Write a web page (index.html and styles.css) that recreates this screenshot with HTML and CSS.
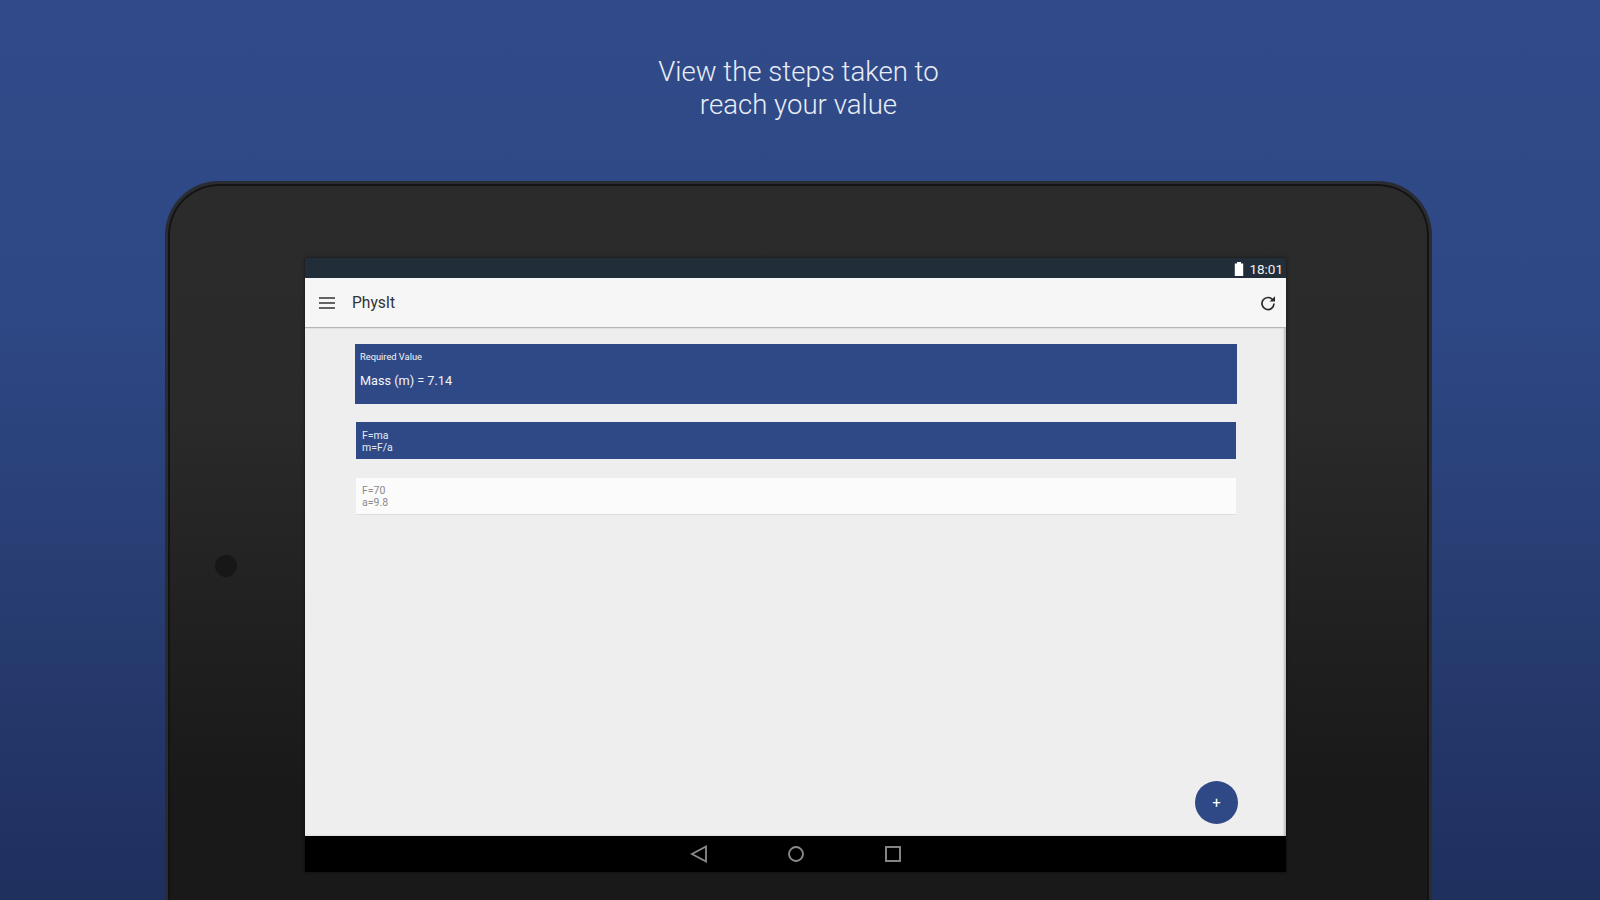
FILE: index.html
```html
<!DOCTYPE html>
<html lang="en">

<head>
  <meta charset="UTF-8" />
  <meta name="viewport" content="width=device-width, initial-scale=1.0" />
  <title>PhysIt</title>
  <link rel="stylesheet" href="styles.css">
</head>

<body>
  <div class="page">
    <h1 class="headline">View the steps taken to<br />reach your value</h1>

    <div class="tablet">
      <div class="camera"></div>
      <div class="screen">
        <div class="status-bar">
          <svg class="battery" width="10" height="14" viewBox="0 0 10 14">
            <path d="M3 0h4v1.5h2.2V14H.8V1.5H3z" fill="#fff" />
          </svg>
          <span class="clock">18:01</span>
        </div>

        <div class="app-bar">
          <svg class="menu-icon" width="16" height="12" viewBox="0 0 16 12">
            <path d="M0 1h16M0 6h16M0 11h16" stroke="#333" stroke-width="1.5" />
          </svg>
          <span class="app-title">PhysIt</span>
          <svg class="refresh-icon" width="16" height="16" viewBox="0 0 16 16">
            <path d="M13 5.2A6 6 0 1 0 14 8.6" fill="none" stroke="#2b2b2b" stroke-width="1.7" />
            <path d="M15 1.2v5.4H9.6z" fill="#2b2b2b" />
          </svg>
        </div>

        <div class="content">
          <div class="card-required">
            <div class="required-label">Required Value</div>
            <div class="required-value">Mass (m) = 7.14</div>
          </div>
          <div class="step step-blue">F=ma<br />m=F/a</div>
          <div class="step step-white">F=70<br />a=9.8</div>
          <div class="fab">+</div>
        </div>

        <div class="nav-bar">
          <svg width="18" height="18" viewBox="0 0 18 18">
            <path d="M16 1.5v15L2 9z" fill="none" stroke="#8a8a8a" stroke-width="1.8" />
          </svg>
          <svg width="18" height="18" viewBox="0 0 18 18">
            <circle cx="9" cy="9" r="7" fill="none" stroke="#8a8a8a" stroke-width="1.9" />
          </svg>
          <svg width="18" height="18" viewBox="0 0 18 18">
            <rect x="2" y="2" width="14" height="14" fill="none" stroke="#8a8a8a" stroke-width="1.9" />
          </svg>
        </div>
      </div>
    </div>
  </div>
</body>

</html>
```

FILE: styles.css
```css
:root {
  --blue: #2f4987;
  --screen-bg: #eeeeee;
}

body {
  margin: 0;
  font-family: Roboto, sans-serif;
}

.page {
  height: 900px;
  overflow: hidden;
  background: linear-gradient(180deg, #314b8a, #2e4885 35%, #293f75 60%, #1f2f5e);
}

.headline {
  height: 74px;
  margin: 0;
  padding: 55px 3px 52px 0;
  text-align: center;
  font-size: 27.6px;
  font-weight: 300;
  line-height: 33px;
  color: #e8edf6;
}

.tablet {
  position: relative;
  width: 1267px;
  height: 760px;
  margin-left: 165px;
  padding: 74px 141px 0 137px;
  box-sizing: border-box;
  background: linear-gradient(180deg, #2b2b2b, #2a2a2a 30%, #191919 80%);
  border: 3px solid #2a2c33;
  border-bottom: none;
  border-radius: 54px 54px 0 0;
  box-shadow: inset 0 0 0 2px #131313;
}

.camera {
  position: absolute;
  left: 47px;
  top: 371px;
  width: 22px;
  height: 22px;
  border-radius: 50%;
  background: #171717;
}

.screen {
  display: flex;
  flex-direction: column;
  width: 981px;
  height: 614px;
  box-shadow: 0 0 3px rgba(0, 0, 0, 0.6);
}

.status-bar {
  display: flex;
  justify-content: flex-end;
  align-items: center;
  gap: 5px;
  height: 20px;
  padding: 1px 3px 0 0;
  box-sizing: border-box;
  background: #212e3a;
  color: #f2f2f2;
}

.clock {
  font-size: 13.5px;
}

.app-bar {
  display: flex;
  align-items: center;
  height: 49px;
  padding: 0 10px 0 14px;
  background: #f6f6f6;
  border-bottom: 1px solid #b5b5b5;
}

.app-title {
  flex-grow: 1;
  margin-left: 17px;
  padding-top: 1px;
  font-size: 15.6px;
  color: #333;
}

.content {
  position: relative;
  flex-grow: 1;
  display: flex;
  flex-direction: column;
  padding: 16px 49px 0 50px;
  background: var(--screen-bg);
  box-shadow: inset -2px 0 2px rgba(0, 0, 0, 0.2);
}

.card-required {
  height: 60px;
  padding: 7px 5px 0 5px;
  box-sizing: border-box;
  background: var(--blue);
  color: #f2f4f9;
}

.required-label {
  font-size: 9.3px;
  line-height: 12px;
}

.required-value {
  margin-top: 10px;
  font-size: 12.7px;
  line-height: 16px;
}

.step {
  height: 37px;
  margin: 18px 1px 0 1px;
  padding: 8px 6px 0 6px;
  box-sizing: border-box;
  font-size: 10.5px;
  line-height: 12.2px;
}

.step-blue {
  background: var(--blue);
  color: #e6ebf5;
}

.step-white {
  margin-top: 19px;
  padding-top: 7px;
  background: #fbfbfb;
  color: #8a8a8a;
  border-bottom: 1px solid #dedede;
}

.fab {
  position: absolute;
  right: 48px;
  bottom: 12px;
  display: flex;
  justify-content: center;
  align-items: center;
  width: 43px;
  height: 43px;
  border-radius: 50%;
  background: var(--blue);
  color: #fff;
  font-size: 15px;
}

.nav-bar {
  display: flex;
  justify-content: center;
  align-items: center;
  gap: 79px;
  height: 36px;
  background: #000;
}
```
